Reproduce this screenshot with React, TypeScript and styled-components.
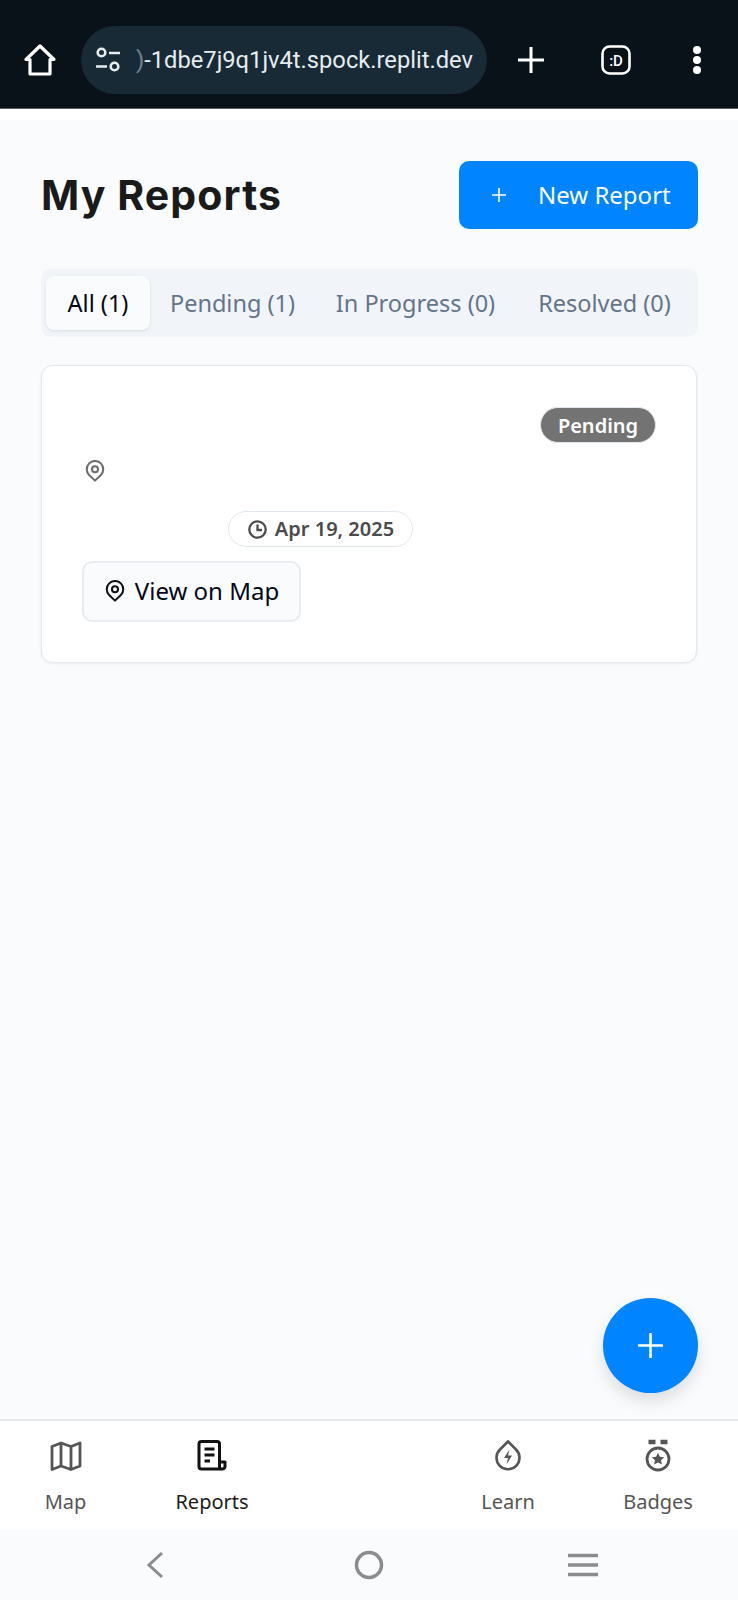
import React from 'react'
import styled, { createGlobalStyle } from 'styled-components'

const GlobalStyle = createGlobalStyle`
html, body {
  margin: 0;
  padding: 0;
  background: #f9fbfd;
}
* { box-sizing: border-box; }
`
const Screen = styled.div`
  position: relative;
  width: 738px;
  height: 1600px;
  display: flex;
  flex-direction: column;
  overflow: hidden;
  background: #f9fbfd;
  font-family: "Noto Sans", "Open Sans", sans-serif;
`
const BrowserBar = styled.div`
  height: 109px;
  flex: none;
  display: flex;
  align-items: center;
  padding: 12px 0 0 23px;
  background: #0a1219;
  border-bottom: 1px solid #5c6063;
  color: #fff;
`
const AddressPill = styled.div`
  width: 406px;
  height: 68px;
  margin-left: 24px;
  padding-left: 14px;
  display: flex;
  align-items: center;
  border-radius: 34px;
  background: #172a35;
`
const UrlText = styled.span`
  width: 340px;
  margin-left: 15px;
  overflow: hidden;
  white-space: nowrap;
  font-family: Roboto, sans-serif;
  font-size: 23.7px;
  color: #e6ecef;
`
const BarIcon = styled.svg<{ $left: number }>`
  flex: none;
  margin-left: ${p => p.$left}px;
`
const Strip = styled.div`
  height: 11px;
  flex: none;
  background: #fff;
`
const Main = styled.main`
  flex: 1;
  padding: 41px 40px 0 41px;
`
const HeaderRow = styled.div`
  display: flex;
  justify-content: space-between;
  align-items: center;
  height: 68px;
`
const Title = styled.h1`
  margin: 0;
  font-family: Inter, sans-serif;
  font-size: 41px;
  font-weight: 700;
  letter-spacing: 1.1px;
  color: #1a1a1a;
`
const NewButton = styled.button`
  width: 239px;
  height: 68px;
  padding: 0 0 1px 33px;
  display: flex;
  align-items: center;
  gap: 32px;
  border: none;
  border-radius: 10px;
  background: #0084ff;
  color: #fff;
  font-family: inherit;
  font-size: 24px;
`
const Tabs = styled.div`
  height: 68px;
  margin-top: 40px;
  padding: 7px 5px;
  display: flex;
  align-items: stretch;
  border-radius: 10px;
  background: #f1f5f9;
`
const Tab = styled.div<{ $active?: boolean; $width: number }>`
  width: ${p => p.$width}px;
  padding-bottom: 1px;
  display: flex;
  align-items: center;
  justify-content: center;
  border-radius: 8px;
  font-size: 23.5px;
  white-space: nowrap;
  color: ${p => (p.$active ? '#020817' : '#64748b')};
  background: ${p => (p.$active ? '#f9fbfd' : 'transparent')};
  box-shadow: ${p => (p.$active ? '0 1px 3px rgba(0,0,0,0.1)' : 'none')};
`
const Card = styled.section`
  height: 298px;
  margin: 28px 1px 0 0;
  padding: 41px 40px 0;
  display: flex;
  flex-direction: column;
  align-items: flex-start;
  background: #fff;
  border: 1px solid #e2e8f0;
  border-radius: 12px;
  box-shadow: 0 1px 3px rgba(0,0,0,0.06);
`
const Badge = styled.span`
  align-self: flex-end;
  height: 36px;
  width: 116px;
  display: flex;
  align-items: center;
  justify-content: center;
  border-radius: 18px;
  background: #737373;
  border: 1px solid #e2e8f0;
  color: #fff;
  font-size: 20px;
  font-weight: 600;
`
const PinRow = styled.div`
  height: 23px;
  margin-top: 17px;
  margin-left: 2px;
  color: #6b6b6b;
  line-height: 23px;
`
const DatePill = styled.div`
  height: 36px;
  width: 185px;
  margin: 28px 0 0 146px;
  display: flex;
  align-items: center;
  justify-content: center;
  gap: 7px;
  border: 1px solid #e2e8f0;
  border-radius: 18px;
  color: #4b4b4b;
  font-size: 20px;
  font-weight: 600;
  line-height: 1;
`
const MapButton = styled.button`
  width: 219px;
  height: 61px;
  margin-top: 14px;
  display: flex;
  align-items: center;
  justify-content: center;
  gap: 9px;
  padding: 0 0 2px;
  border: 2px solid #e8ecf2;
  border-radius: 10px;
  background: #f9fbfd;
  color: #020817;
  font-family: inherit;
  font-size: 24px;
`
const Fab = styled.button`
  position: absolute;
  left: 603px;
  top: 1298px;
  width: 95px;
  height: 95px;
  padding: 0;
  display: flex;
  align-items: center;
  justify-content: center;
  border: none;
  border-radius: 50%;
  background: #0084ff;
  box-shadow: 0 8px 16px rgba(0,0,0,0.12);
`
const BottomNav = styled.nav`
  height: 110px;
  flex: none;
  display: grid;
  grid-template-columns: 131px 162px 139px 152px 148px;
  background: #fff;
  border-top: 2px solid #e5e7eb;
`
const NavItem = styled.div<{ $active?: boolean }>`
  display: flex;
  flex-direction: column;
  align-items: center;
  padding-top: 18px;
  color: ${p => (p.$active ? '#1c1c1c' : '#555')};
  font-size: 20px;
`
const NavLabel = styled.span`
  margin-top: 15px;
  line-height: 28px;
`
const SystemNav = styled.div`
  height: 71px;
  flex: none;
  display: grid;
  grid-template-columns: 126px 58px 156px 58px 156px 58px 126px;
  align-items: center;
  background: #f9fbfd;
`
const SystemCell = styled.div<{ $col: number }>`
  grid-column: ${p => p.$col};
  display: flex;
  justify-content: center;
`

const PinIcon = ({ size, color }: { size: number; color: string }) => (
    <svg width={size} height={size} viewBox="0 0 24 24" fill="none" stroke={color} strokeWidth="2.2" strokeLinejoin="round">
        <path d="M12 22.500 5.600 16.400a9 9 0 1 1 12.800 0z" />
        <circle cx="12" cy="10" r="3.300" />
    </svg>
)

const tabs = [
    { label: 'All (1)', width: 104, active: true },
    { label: 'Pending (1)', width: 165 },
    { label: 'In Progress (0)', width: 201 },
    { label: 'Resolved (0)', width: 177 },
]

const App = () => {
    return (
        <Screen>
            <GlobalStyle />
            <BrowserBar>
                <svg width="34" height="34" viewBox="0 0 34 34" fill="none" stroke="#fff" strokeWidth="3.2" strokeLinejoin="round">
                    <path d="M3 16.500 17 3l14 13.500h-4V31H7V16.500z" />
                </svg>
                <AddressPill>
                    <svg width="26" height="26" viewBox="0 0 26 26" fill="none" stroke="#e6ecef" strokeWidth="2.600">
                        <circle cx="6.500" cy="5.500" r="3.800" />
                        <path d="M14 6h11M1 19.500h11" />
                        <circle cx="19.500" cy="19.500" r="3.800" />
                    </svg>
                    <UrlText>
                        <span style={{ opacity: 0.45 }}>)</span>-1dbe7j9q1jv4t.spock.replit.dev
                    </UrlText>
                </AddressPill>
                <BarIcon $left={30} width="28" height="28" viewBox="0 0 28 28" stroke="#fff" strokeWidth="3" fill="none">
                    <path d="M14 1v26M1 14h26" />
                </BarIcon>
                <BarIcon $left={56} width="30" height="30" viewBox="0 0 30 30" fill="none">
                    <rect x="1.500" y="1.500" width="27" height="27" rx="7" stroke="#fff" strokeWidth="2.600" />
                    <text x="15" y="20.500" textAnchor="middle" fill="#fff" fontFamily="Roboto, sans-serif" fontSize="15" fontWeight="500">:D</text>
                </BarIcon>
                <BarIcon $left={61} width="10" height="30" viewBox="0 0 10 30" fill="#fff">
                    <circle cx="5" cy="5" r="4" />
                    <circle cx="5" cy="15" r="4" />
                    <circle cx="5" cy="25" r="4" />
                </BarIcon>
            </BrowserBar>
            <Strip />
            <Main>
                <HeaderRow>
                    <Title>My Reports</Title>
                    <NewButton>
                        <svg width="14" height="14" viewBox="0 0 14 14" stroke="#fff" strokeWidth="1.600">
                            <path d="M7 0v14M0 7h14" />
                        </svg>
                        New Report
                    </NewButton>
                </HeaderRow>
                <Tabs>
                    {tabs.map(t => (
                        <Tab key={t.label} $active={t.active} $width={t.width}>{t.label}</Tab>
                    ))}
                </Tabs>
                <Card>
                    <Badge>Pending</Badge>
                    <PinRow><PinIcon size={22} color="#6b6b6b" /></PinRow>
                    <DatePill>
                        <svg width="21" height="21" viewBox="0 0 21 21" fill="none" stroke="#4b4b4b" strokeWidth="2.300">
                            <circle cx="10.500" cy="10.500" r="8.200" />
                            <path d="M10.500 5.500v5.500h4.500" />
                        </svg>
                        Apr 19, 2025
                    </DatePill>
                    <MapButton><PinIcon size={22} color="#111" />View on Map</MapButton>
                </Card>
            </Main>
            <Fab aria-label="Add">
                <svg width="25" height="25" viewBox="0 0 25 25" stroke="#fff" strokeWidth="2.600">
                    <path d="M12.500 0v25M0 12.500h25" />
                </svg>
            </Fab>
            <BottomNav>
                <NavItem>
                    <svg width="34" height="34" viewBox="0 0 34 34" fill="none" stroke="#555" strokeWidth="2.800" strokeLinejoin="round">
                        <path d="M3 7.500 12 4l10 3.500L31 4v23l-9 3.500L12 27l-9 3.500z" />
                        <path d="M12 4v23M22 7.500v23" />
                    </svg>
                    <NavLabel>Map</NavLabel>
                </NavItem>
                <NavItem $active>
                    <svg width="34" height="34" viewBox="0 0 34 34" fill="none" stroke="#111" strokeWidth="3" strokeLinejoin="round">
                        <path d="M27 30H6.500A2.500 2.500 0 0 1 4 27.500V5a2.500 2.500 0 0 1 2.500-2.500H22A2.500 2.500 0 0 1 24.500 5v22.500A2.500 2.500 0 0 0 27 30a2.500 2.500 0 0 0 3-2.500V23h-5.500" />
                        <path d="M9.500 10h10M9.500 16h10M9.500 22h5.500" />
                    </svg>
                    <NavLabel>Reports</NavLabel>
                </NavItem>
                <div />
                <NavItem>
                    <svg width="34" height="34" viewBox="0 0 34 34" fill="none" stroke="#555" strokeWidth="2.600" strokeLinejoin="round">
                        <path d="M17 2.500 9 10.500a11.500 11.500 0 1 0 16 0z" />
                        <path d="M18.500 10.500 13 19h4l-1.500 6.500 5.500-9h-4z" fill="#555" stroke="none" />
                    </svg>
                    <NavLabel>Learn</NavLabel>
                </NavItem>
                <NavItem>
                    <svg width="34" height="34" viewBox="0 0 34 34" fill="none" stroke="#555" strokeWidth="2.800">
                        <path d="M7.500 3h7M19.500 3h7" strokeWidth="4.500" />
                        <circle cx="17" cy="20" r="11" />
                        <path d="m17 13.800 1.900 4 4.300.5-3.200 3 .9 4.300-3.900-2.200-3.900 2.200.9-4.300-3.200-3 4.300-.5z" fill="#555" stroke="none" />
                    </svg>
                    <NavLabel>Badges</NavLabel>
                </NavItem>
            </BottomNav>
            <SystemNav>
                <SystemCell $col={2}>
                    <svg width="20" height="28" viewBox="0 0 20 28" fill="none" stroke="#8c8c8c" strokeWidth="3">
                        <path d="M17 2 4 14l13 12" />
                    </svg>
                </SystemCell>
                <SystemCell $col={4}>
                    <svg width="30" height="30" viewBox="0 0 30 30" fill="none" stroke="#8c8c8c" strokeWidth="3.500">
                        <circle cx="15" cy="15" r="12.500" />
                    </svg>
                </SystemCell>
                <SystemCell $col={6}>
                    <svg width="30" height="24" viewBox="0 0 30 24" stroke="#8c8c8c" strokeWidth="3.500">
                        <path d="M0 2.500h30M0 12h30M0 21.500h30" />
                    </svg>
                </SystemCell>
            </SystemNav>
        </Screen>
    )
}
export default App
